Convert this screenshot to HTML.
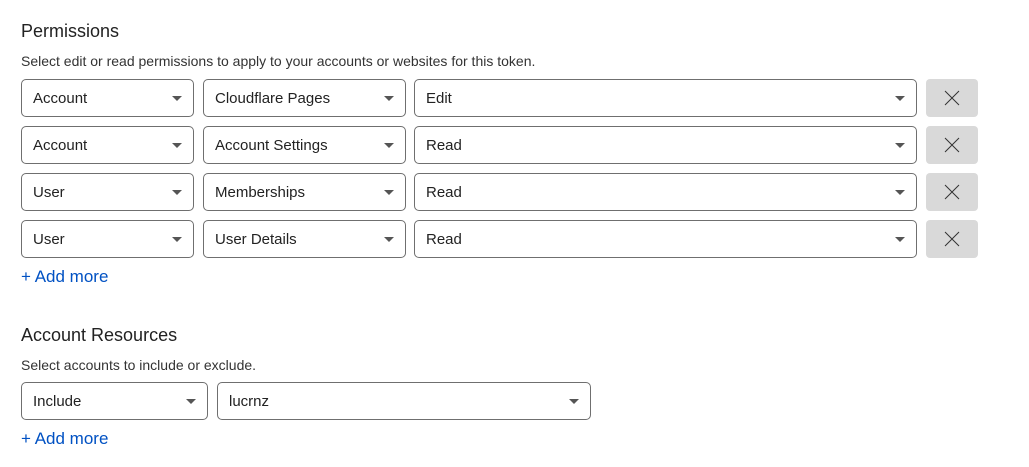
<!DOCTYPE html>
<html><head><style>
body{margin:0;width:1029px;height:467px;background:#fff;font-family:"Liberation Sans",sans-serif;color:#313131;position:relative;overflow:hidden}
.a{position:absolute}
.h{font-size:18px;color:#222}
.s{font-size:14px;color:#333}
.sel{position:absolute;height:36px;border:1px solid #6f6f6f;border-radius:5px;box-sizing:content-box;font-size:15px;line-height:38px;padding-left:11px;color:#222}
.sel:after{content:"";position:absolute;right:11px;top:16px;border-left:5px solid transparent;border-right:5px solid transparent;border-top:5px solid #555}
.add{font-size:17px;color:#0051c3}
</style></head><body>
<div class="a h" style="left:21px;top:21px">Permissions</div>
<div class="a s" style="left:21px;top:53px">Select edit or read permissions to apply to your accounts or websites for this token.</div>

<div class="sel" style="left:21px;top:79px;width:160px">Account</div>
<div class="sel" style="left:203px;top:79px;width:190px">Cloudflare Pages</div>
<div class="sel" style="left:414px;top:79px;width:490px">Edit</div>

<div class="sel" style="left:21px;top:126px;width:160px">Account</div>
<div class="sel" style="left:203px;top:126px;width:190px">Account Settings</div>
<div class="sel" style="left:414px;top:126px;width:490px">Read</div>

<div class="sel" style="left:21px;top:173px;width:160px">User</div>
<div class="sel" style="left:203px;top:173px;width:190px">Memberships</div>
<div class="sel" style="left:414px;top:173px;width:490px">Read</div>

<div class="sel" style="left:21px;top:220px;width:160px">User</div>
<div class="sel" style="left:203px;top:220px;width:190px">User Details</div>
<div class="sel" style="left:414px;top:220px;width:490px">Read</div>

<svg class="a" style="left:926px;top:79px" width="52" height="180">
<g fill="#d9d9d9"><rect x="0" y="0" width="52" height="38" rx="4"/><rect x="0" y="47" width="52" height="38" rx="4"/><rect x="0" y="94" width="52" height="38" rx="4"/><rect x="0" y="141" width="52" height="38" rx="4"/></g>
<g stroke="#333" stroke-width="1"><path d="M19 12l14 14M33 12l-14 14"/><path d="M19 59l14 14M33 59l-14 14"/><path d="M19 106l14 14M33 106l-14 14"/><path d="M19 153l14 14M33 153l-14 14"/></g>
</svg>

<div class="a add" style="left:21px;top:267px">+ Add more</div>

<div class="a h" style="left:21px;top:325px">Account Resources</div>
<div class="a s" style="left:21px;top:357px">Select accounts to include or exclude.</div>
<div class="sel" style="left:21px;top:382px;width:174px">Include</div>
<div class="sel" style="left:217px;top:382px;width:361px">lucrnz</div>
<div class="a add" style="left:21px;top:429px">+ Add more</div>
</body></html>
